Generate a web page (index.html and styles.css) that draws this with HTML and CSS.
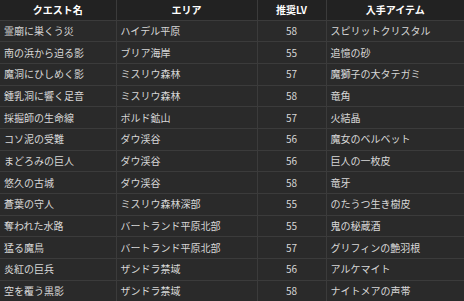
FILE: index.html
```html
<!DOCTYPE html>
<html lang="ja">
<head>
<meta charset="utf-8">
<link rel="stylesheet" href="styles.css">
</head>
<body>
<table class="quests">
  <colgroup>
    <col class="c-name"><col class="c-area"><col class="c-lv"><col class="c-item">
  </colgroup>
  <thead>
    <tr><th>クエスト名</th><th>エリア</th><th>推奨LV</th><th>入手アイテム</th></tr>
  </thead>
  <tbody>
    <tr><td>霊廟に巣くう災</td><td>ハイデル平原</td><td class="num">58</td><td>スピリットクリスタル</td></tr>
    <tr><td>南の浜から迫る影</td><td>ブリア海岸</td><td class="num">55</td><td>追憶の砂</td></tr>
    <tr><td>魔洞にひしめく影</td><td>ミスリウ森林</td><td class="num">57</td><td>魔獅子の大タテガミ</td></tr>
    <tr><td>鍾乳洞に響く足音</td><td>ミスリウ森林</td><td class="num">58</td><td>竜角</td></tr>
    <tr><td>採掘師の生命線</td><td>ボルド鉱山</td><td class="num">57</td><td>火結晶</td></tr>
    <tr><td>コソ泥の受難</td><td>ダウ渓谷</td><td class="num">56</td><td>魔女のベルベット</td></tr>
    <tr><td>まどろみの巨人</td><td>ダウ渓谷</td><td class="num">56</td><td>巨人の一枚皮</td></tr>
    <tr><td>悠久の古城</td><td>ダウ渓谷</td><td class="num">58</td><td>竜牙</td></tr>
    <tr><td>蒼葉の守人</td><td>ミスリウ森林深部</td><td class="num">55</td><td>のたうつ生き樹皮</td></tr>
    <tr><td>奪われた水路</td><td>バートランド平原北部</td><td class="num">55</td><td>鬼の秘蔵酒</td></tr>
    <tr><td>猛る魔鳥</td><td>バートランド平原北部</td><td class="num">57</td><td>グリフィンの艶羽根</td></tr>
    <tr><td>炎紅の巨兵</td><td>ザンドラ禁域</td><td class="num">56</td><td>アルケマイト</td></tr>
    <tr><td>空を覆う黒影</td><td>ザンドラ禁域</td><td class="num">58</td><td>ナイトメアの声帯</td></tr>
  </tbody>
</table>
</body>
</html>
```
FILE: styles.css
```css
html, body {
  margin: 0;
  padding: 0;
  background: #2a2a2a;
  overflow: hidden;
}
.quests {
  width: 464px;
  border-collapse: collapse;
  table-layout: fixed;
  font-family: "Noto Sans CJK JP", "Noto Sans", sans-serif;
  font-size: 10px;
  color: #d8d8d8;
}
.c-name { width: 116px; }
.c-area { width: 141px; }
.c-lv { width: 69px; }
.c-item { width: 138px; }
.quests th,
.quests td {
  border: 1px solid #3b3b3b;
  padding: 0 4px;
  white-space: nowrap;
  overflow: hidden;
  line-height: 12px;
}
.quests tr:first-child th,
.quests tr:first-child td { border-top: none; }
.quests th:first-child,
.quests td:first-child { border-left: none; }
.quests th:last-child,
.quests td:last-child { border-right: none; }
.quests th {
  background: #222222;
  color: #ffffff;
  font-weight: bold;
  text-align: center;
  height: 19.7px;
}
.quests td {
  background: #2a2a2a;
  text-align: left;
  height: 20.67px;
}
.quests td.num { text-align: center; }
```
